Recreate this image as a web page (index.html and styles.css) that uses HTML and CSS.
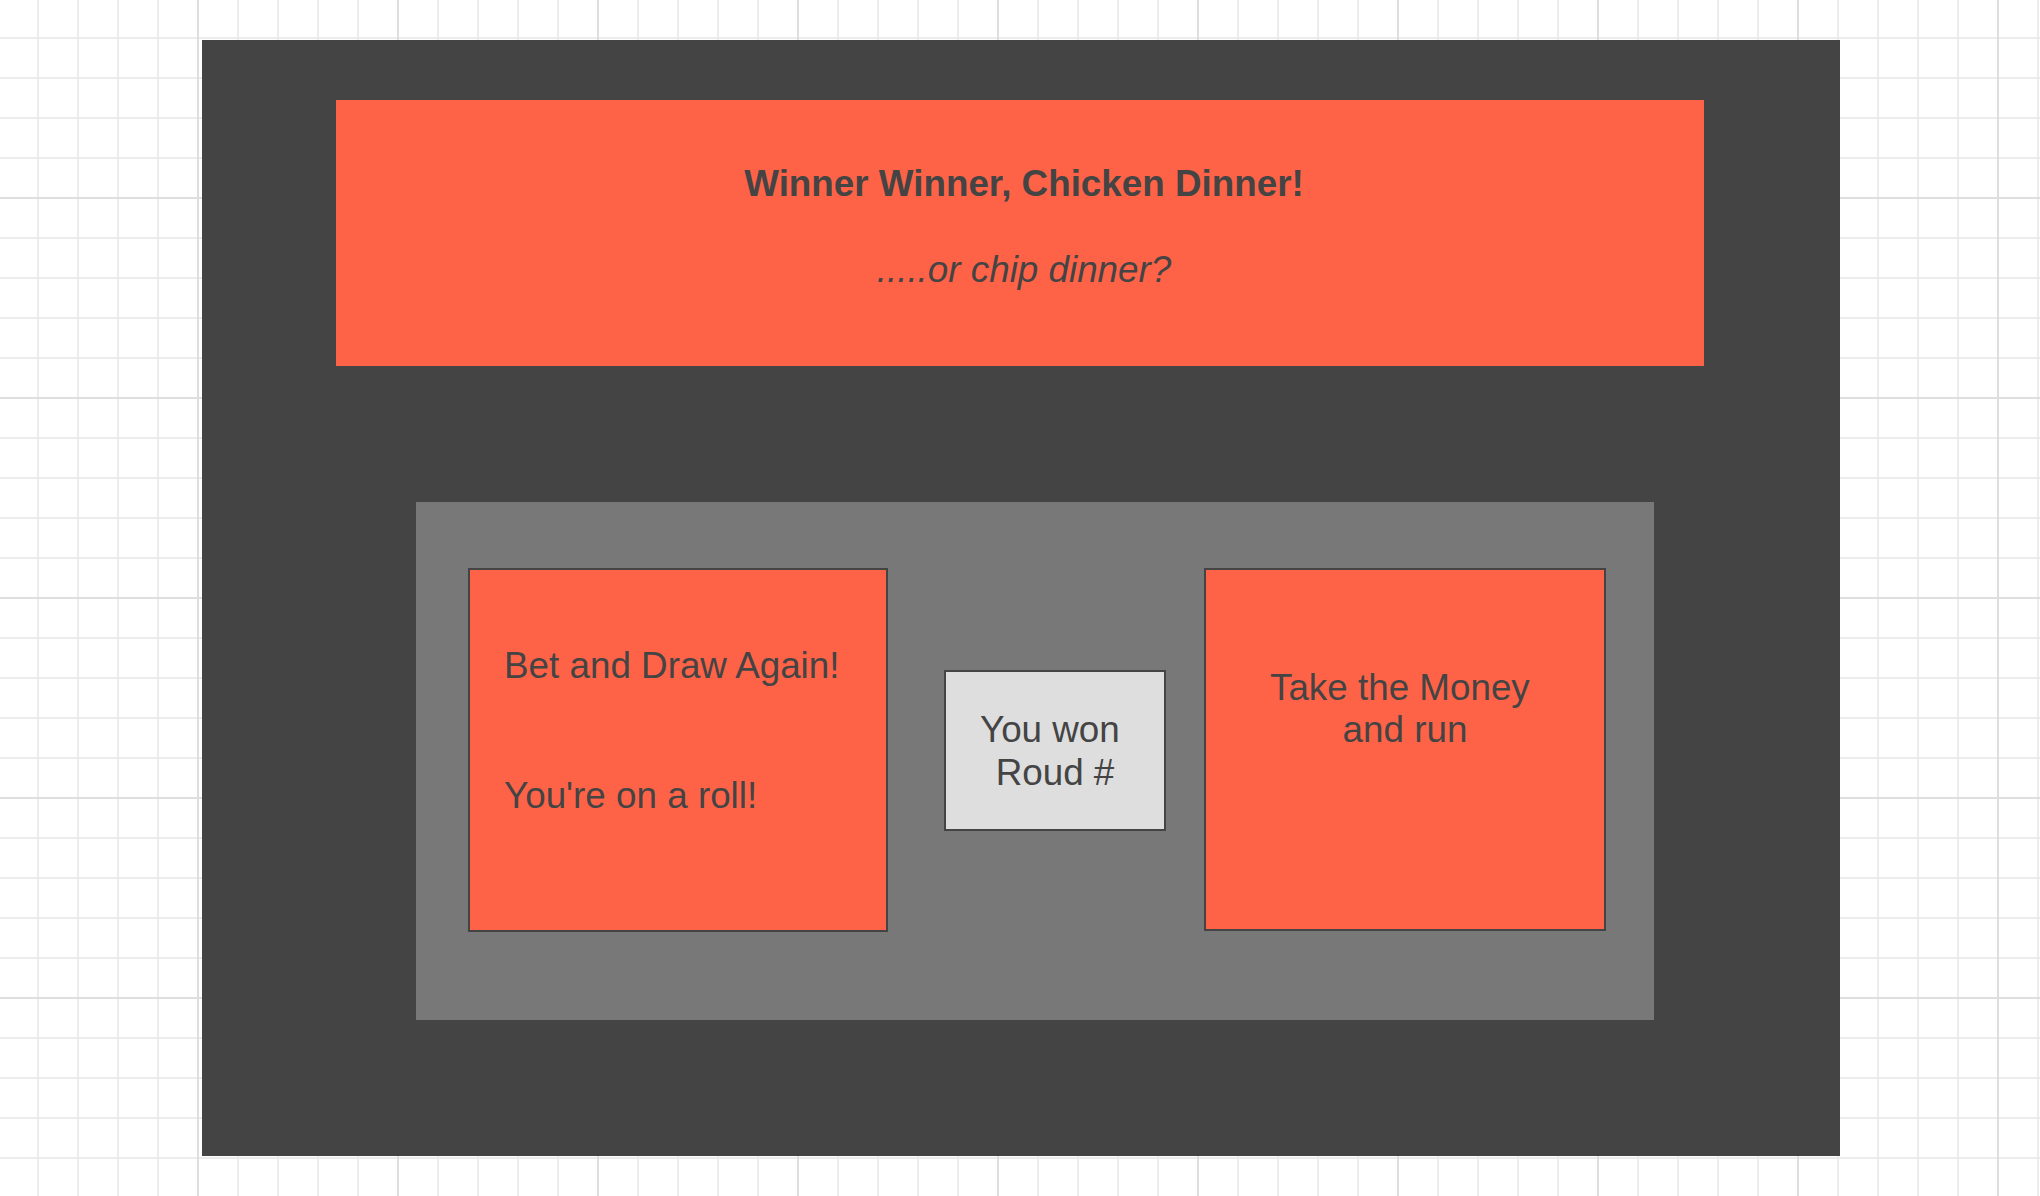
FILE: index.html
```html
<!DOCTYPE html>
<html lang="en">
<head>
<meta charset="utf-8">
<title>Winner Winner, Chicken Dinner!</title>
<link rel="stylesheet" href="styles.css">
</head>
<body>
  <main class="frame">
    <header class="banner">
      <h1 class="banner-title">Winner Winner, Chicken Dinner!</h1>
      <p class="banner-sub">.....or chip dinner?</p>
    </header>
    <section class="panel">
      <div class="card card-left">
        <p class="card-line">Bet and Draw Again!</p>
        <p class="card-line card-line-second">You're on a roll!</p>
      </div>
      <div class="round">You won&nbsp;<br>Roud #</div>
      <div class="card card-right">
        <p class="card-center">Take the Money&nbsp;<br>and run</p>
      </div>
    </section>
  </main>
</body>
</html>
```
FILE: styles.css
```css
html, body {
  margin: 0;
  padding: 0;
}

body {
  min-height: 100vh;
  font-family: "Liberation Sans", Arial, sans-serif;
  color: #444444;
  background-color: #ffffff;
  background-image:
    linear-gradient(to right, #dedede 2px, transparent 2px),
    linear-gradient(to bottom, #dedede 2px, transparent 2px),
    linear-gradient(to right, #ececec 2px, transparent 2px),
    linear-gradient(to bottom, #ececec 2px, transparent 2px);
  background-size: 200px 200px, 200px 200px, 40px 40px, 40px 40px;
  background-position: 197px 0, 0 197px, 37px 0, 0 37px;
  overflow: hidden;
}

.frame {
  box-sizing: border-box;
  width: 1638px;
  height: 1116px;
  margin: 40px 0 0 202px;
  padding-top: 60px;
  background: #444444;
}

.banner {
  box-sizing: border-box;
  width: 1368px;
  height: 266px;
  margin-left: 134px;
  padding: 63px 0 0 8px;
  background: #ff6347;
  text-align: center;
}

.banner-title {
  margin: 0;
  font-size: 36.8px;
  font-weight: bold;
  line-height: normal;
}

.banner-sub {
  margin: 43.5px 0 0;
  font-size: 36.8px;
  font-style: italic;
  line-height: normal;
}

.panel {
  box-sizing: border-box;
  display: flex;
  align-items: flex-start;
  width: 1238px;
  height: 518px;
  margin: 136px 0 0 214px;
  padding: 66px 48px 88px 52px;
  background: #787878;
}

.card {
  box-sizing: border-box;
  flex: none;
  background: #ff6347;
  border: 2px solid #444444;
  font-size: 36.8px;
}

.card-left {
  width: 420px;
  height: 364px;
  padding: 75px 34px 0;
}

.card-line {
  margin: 0;
  line-height: normal;
}

.card-line-second {
  margin-top: 87.5px;
}

.round {
  box-sizing: border-box;
  flex: none;
  display: flex;
  align-items: center;
  justify-content: center;
  width: 222px;
  height: 161px;
  margin: 102px 38px 0 56px;
  background: #dedede;
  border: 2px solid #444444;
  font-size: 36.8px;
  text-align: center;
  line-height: 43px;
}

.card-right {
  width: 402px;
  height: 363px;
  padding-top: 97px;
}

.card-center {
  margin: 0;
  text-align: center;
  line-height: 42px;
}
```
